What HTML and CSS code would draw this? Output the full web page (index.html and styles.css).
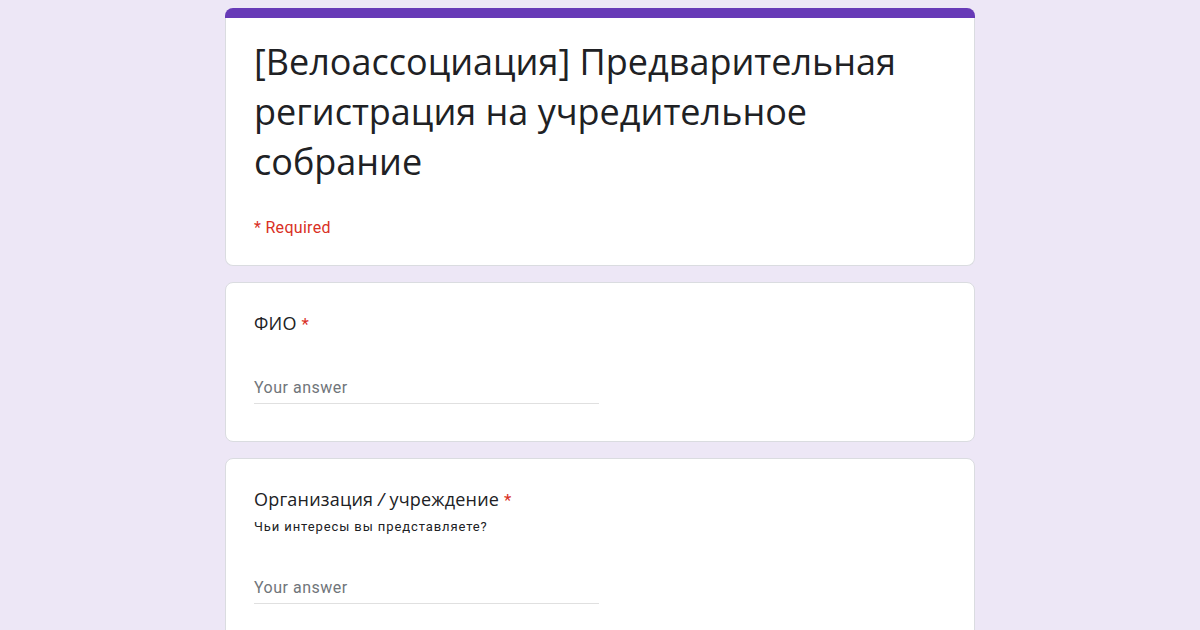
FILE: index.html
```html
<!DOCTYPE html>
<html lang="ru">
<head>
<meta charset="utf-8">
<link rel="stylesheet" href="styles.css">
</head>
<body>
<div class="column">
  <div class="card header-card">
    <div class="accent"></div>
    <div class="header-body">
      <h1 class="title">[Велоассоциация] Предварительная регистрация на учредительное собрание</h1>
      <div class="required-note">* Required</div>
    </div>
  </div>
  <div class="card question">
    <div class="q-title">ФИО <span class="star">*</span></div>
    <div class="answer">Your answer</div>
  </div>
  <div class="card question">
    <div class="q-title">Организация <i class="slash">/</i> учреждение <span class="star">*</span></div>
    <div class="q-desc">Чьи интересы вы представляете?</div>
    <div class="answer">Your answer</div>
  </div>
</div>
</body>
</html>
```
FILE: styles.css
```css
html, body {
  margin: 0;
  padding: 0;
  background: #ede7f6;
}
body {
  font-family: Roboto, "Liberation Sans", sans-serif;
  color: #202124;
  height: 630px;
  overflow: hidden;
}
.column {
  width: 750px;
  margin: 8px auto 0;
  display: flex;
  flex-direction: column;
  gap: 16px;
}
.card {
  background: #fff;
  border: 1px solid #dadce0;
  border-radius: 8px;
}
.header-card {
  border: none;
  background: transparent;
}
.accent {
  height: 10px;
  background: #673ab7;
  border-radius: 8px 8px 0 0;
}
.header-body {
  background: #fff;
  border: 1px solid #dadce0;
  border-top: none;
  border-radius: 0 0 8px 8px;
  padding: 19px 28px 25px;
}
.title {
  margin: 0;
  font-family: "Open Sans", "Noto Sans", sans-serif;
  font-weight: 400;
  font-size: 36px;
  line-height: 50px;
  color: #202124;
}
.required-note {
  margin-top: 29px;
  color: #d93025;
  font-size: 16px;
  line-height: 24px;
  letter-spacing: 0.3px;
}
.question {
  padding: 27px 28px 37px;
}
.q-title {
  font-family: "Open Sans", "Noto Sans", sans-serif;
  font-size: 18px;
  line-height: 26px;
  letter-spacing: 0.2px;
  color: #202124;
}
.slash {
  font-style: italic;
}
.star {
  font-family: Roboto, "Liberation Sans", sans-serif;
  font-size: 17px;
  line-height: 1;
  color: #d93025;
}
.q-desc {
  font-size: 13px;
  font-weight: 400;
  line-height: 18px;
  letter-spacing: 0.9px;
  margin-top: 6px;
  color: #202124;
}
.answer {
  margin-top: 41px;
  width: 345px;
  font-size: 16px;
  line-height: 22px;
  letter-spacing: 0.5px;
  color: #70757a;
  padding-bottom: 4px;
  border-bottom: 1px solid #e0e0e0;
}
```
